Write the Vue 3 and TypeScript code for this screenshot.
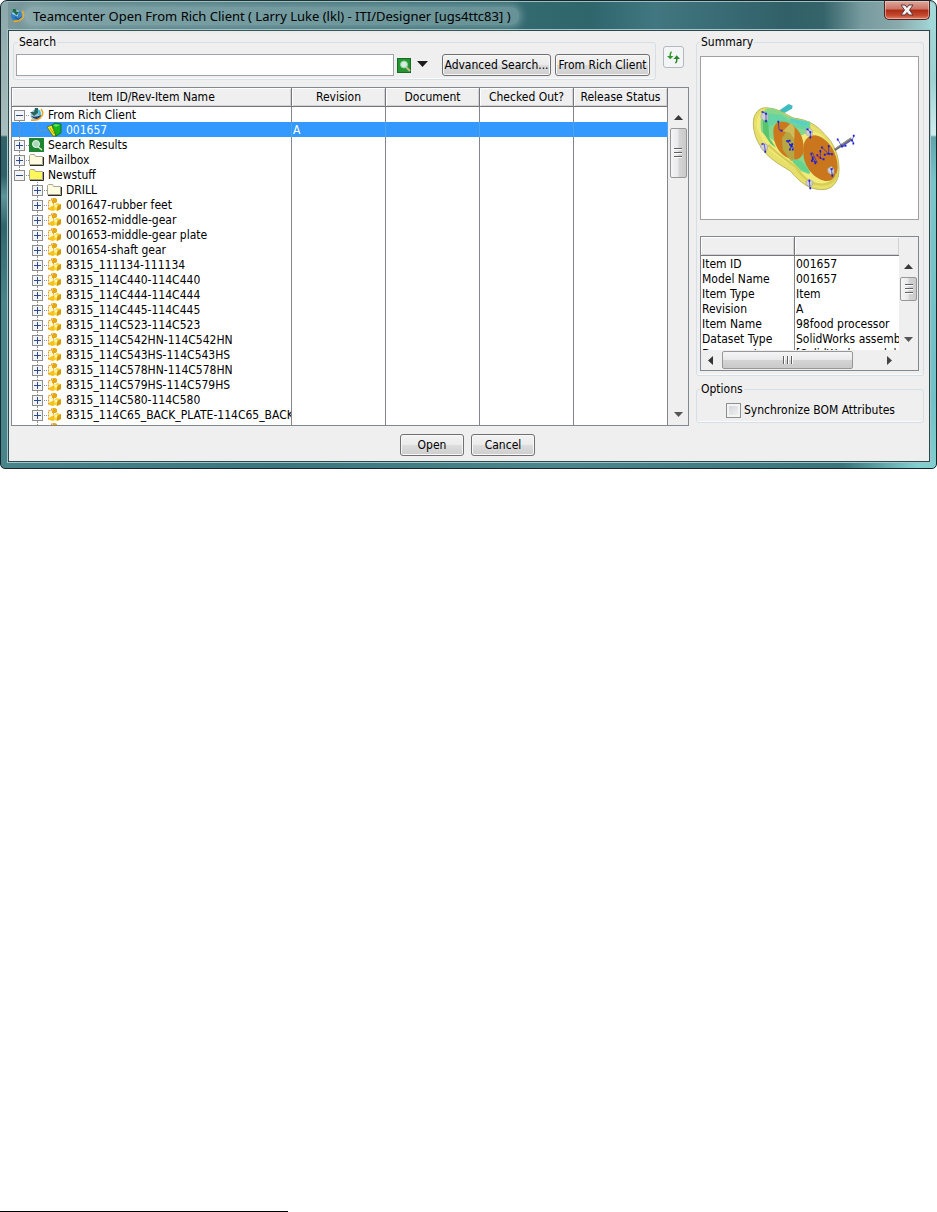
<script setup lang="ts">
import { ref } from 'vue'

type IconKind = 'client' | 'model' | 'search' | 'folder' | 'folder-open' | 'item'

interface TreeNode {
  label: string
  icon: IconKind
  level: number
  toggle: 'plus' | 'minus' | 'none'
  revision?: string
  root?: 'first' | 'middle' | 'last'
}

const item = (label: string): TreeNode => ({ label, icon: 'item', level: 1, toggle: 'plus' })

const nodes: TreeNode[] = [
  { label: 'From Rich Client', icon: 'client', level: 0, toggle: 'minus', root: 'first' },
  { label: '001657', icon: 'model', level: 1, toggle: 'none', revision: 'A', root: 'middle' },
  { label: 'Search Results', icon: 'search', level: 0, toggle: 'plus', root: 'middle' },
  { label: 'Mailbox', icon: 'folder', level: 0, toggle: 'plus', root: 'middle' },
  { label: 'Newstuff', icon: 'folder-open', level: 0, toggle: 'minus', root: 'last' },
  { label: 'DRILL', icon: 'folder', level: 1, toggle: 'plus' },
  item('001647-rubber feet'),
  item('001652-middle-gear'),
  item('001653-middle-gear plate'),
  item('001654-shaft gear'),
  item('8315_111134-111134'),
  item('8315_114C440-114C440'),
  item('8315_114C444-114C444'),
  item('8315_114C445-114C445'),
  item('8315_114C523-114C523'),
  item('8315_114C542HN-114C542HN'),
  item('8315_114C543HS-114C543HS'),
  item('8315_114C578HN-114C578HN'),
  item('8315_114C579HS-114C579HS'),
  item('8315_114C580-114C580'),
  item('8315_114C65_BACK_PLATE-114C65_BACK'),
  item(''),
]

const columns: string[] = ['Revision', 'Document', 'Checked Out?', 'Release Status']

const details: [string, string][] = [
  ['Item ID', '001657'],
  ['Model Name', '001657'],
  ['Item Type', 'Item'],
  ['Revision', 'A'],
  ['Item Name', '98food processor'],
  ['Dataset Type', 'SolidWorks assemb'],
  ['Document', '[SolidWorks model'],
]

const selected = ref('001657')
const query = ref('')
const sync = ref(false)
</script>

<template>
  <div class="page">
    <section class="window">
      <header class="titlebar">
        <svg class="app-icon" viewBox="0 0 16 16" aria-hidden="true">
          <circle cx="7" cy="8" r="6" fill="#2f7fc4" />
          <path d="M2 6Q5 1 10 3L8 9Z" fill="#a9d8f0" />
          <path d="M3 1h3l1 3h3L7 8 3 4Z" fill="#1f6b45" />
          <path d="M13 3q3 4 0 8-4 4-9 3" fill="none" stroke="#f0a51e" stroke-width="2" />
          <path d="M5 10l4 2 4-3" fill="none" stroke="#163f80" stroke-width="1" />
        </svg>
        <h1>Teamcenter Open From Rich Client ( Larry Luke (lkl) - ITI/Designer [ugs4ttc83] )</h1>
        <button class="close" type="button" aria-label="Close">
          <svg viewBox="0 0 14 12" aria-hidden="true">
            <path d="M1 1h4l2 2.500L9 1h4L9.500 6 13 11H9L7 8.500 5 11H1l3.500-5Z" fill="#f4f4f4" stroke="#5b3a3c" stroke-width="1" />
          </svg>
        </button>
      </header>

      <main class="client">
        <div class="content">
          <div class="left">
            <div class="top-row">
              <fieldset class="group search">
                <legend>Search</legend>
                <div class="search-row">
                  <input v-model="query" type="text" aria-label="Search" />
                  <button class="bare find" type="button" aria-label="Find">
                    <svg viewBox="0 0 14 15" aria-hidden="true">
                      <rect x=".5" y=".5" width="13" height="14" fill="#249530" stroke="#166b22" />
                      <path d="M8 8l5 5" stroke="#c9b58b" stroke-width="2" />
                      <circle cx="7" cy="6.500" r="3.500" fill="#d2eee2" stroke="#8fd39c" />
                    </svg>
                  </button>
                  <button class="bare drop" type="button" aria-label="Search options">
                    <svg viewBox="0 0 11 6" aria-hidden="true"><path d="M0 0h11L5.500 6Z" fill="#1c1c1c" /></svg>
                  </button>
                  <button class="push advanced" type="button">Advanced Search...</button>
                  <button class="push rich" type="button">From Rich Client</button>
                </div>
              </fieldset>
              <button class="refresh" type="button" aria-label="Refresh">
                <svg viewBox="0 0 14 14" aria-hidden="true">
                  <path d="M5 1Q3 2 3.500 6" fill="none" stroke="#2f9a2c" stroke-width="1.500" />
                  <path d="M0 5.500h7L3.500 9Z" fill="#2f9a2c" />
                  <path d="M9 13q2-1 1.500-5" fill="none" stroke="#2a8428" stroke-width="1.500" />
                  <path d="M7 8.500h7L10.500 4.500Z" fill="#2a8428" />
                </svg>
              </button>
            </div>

            <div class="tree-frame">
              <div class="tree-view">
                <table class="tree">
                  <colgroup>
                    <col class="name-col" />
                    <col v-for="c in columns" :key="c" class="attr-col" />
                  </colgroup>
                  <thead>
                    <tr>
                      <th scope="col">Item ID/Rev-Item Name</th>
                      <th v-for="c in columns" :key="c" scope="col">{{ c }}</th>
                    </tr>
                  </thead>
                  <tbody>
                    <tr
                      v-for="n in nodes"
                      :key="n.label"
                      :class="{ selected: n.label === selected }"
                      @click="selected = n.label"
                    >
                      <td>
                        <div class="node">
                          <span v-if="n.level === 1" class="rail">
                            <svg v-if="n.root" viewBox="0 0 18 15" aria-hidden="true"><path d="M7.500 0V15" class="dots" /></svg>
                          </span>
                          <button class="bare toggle" type="button" :tabindex="n.toggle === 'none' ? -1 : 0" :aria-label="'Toggle ' + n.label">
                            <svg viewBox="0 0 17 15" aria-hidden="true">
                              <path v-if="n.level === 1 || n.root === 'middle'" :d="n.toggle === 'none' ? 'M7.500 0V8' : 'M7.500 0V15'" class="dots" />
                              <path v-if="n.root === 'last'" d="M7.500 0V8" class="dots" />
                              <path v-if="n.root === 'first'" d="M7.500 8V15" class="dots" />
                              <path d="M8 8.500H17" class="dots" />
                              <g v-if="n.toggle !== 'none'">
                                <rect x="2.500" y="3.500" width="10" height="10" fill="#f4f4f4" stroke="#8d8d8d" />
                                <path d="M4 8.500h7" stroke="#2c4a94" />
                                <path v-if="n.toggle === 'plus'" d="M7.500 5v7" stroke="#2c4a94" />
                              </g>
                            </svg>
                          </button>
                          <svg class="icon" viewBox="0 0 15 15" aria-hidden="true">
                            <g v-if="n.icon === 'client'">
                              <circle cx="7" cy="8" r="5.500" fill="#9cc9dd" />
                              <path d="M1 5h4l1-4h3l0 5-4 3Z" fill="#2d6658" />
                              <path d="M2 9q4 5 10 2V8q-5 3-10 1Z" fill="#223f74" />
                              <path d="M12 2q4 5-1 9-3 3-9 2" fill="none" stroke="#efa522" stroke-width="1.500" />
                              <path d="M9 3q3 2 1 5" fill="none" stroke="#3cc2e0" stroke-width="2" />
                            </g>
                            <g v-else-if="n.icon === 'model'">
                              <path d="M0 5L5 3l4 6v5L6 14Z" fill="#f4ee1d" stroke="#55550e" stroke-width=".7" />
                              <path d="M5 3L8 1l6 1v9l-5 3-2-5Z" fill="#18b51d" stroke="#0a5c10" stroke-width=".7" />
                              <path d="M6 3l3-1 4 1-4 2Z" fill="#5ee05c" />
                              <path d="M3 6l4 6M5 5l3 5" stroke="#8a8210" stroke-width=".7" />
                            </g>
                            <g v-else-if="n.icon === 'search'">
                              <rect x="0" y="1" width="15" height="14" fill="#1f8430" />
                              <path d="M8 9l5 4" stroke="#dff0da" stroke-width="1.500" />
                              <circle cx="7" cy="7" r="3.500" fill="#a9d9bd" stroke="#e7f7e9" />
                            </g>
                            <g v-else-if="n.icon === 'folder' || n.icon === 'folder-open'">
                              <path d="M.5 12.500v-9l1-1h4l1 2h7v8Z" :fill="n.icon === 'folder' ? '#fdfce0' : '#fdf75e'" stroke="#a9a68c" />
                              <path d="M14.500 5v8.500H1" fill="none" stroke="#2b2b2b" />
                            </g>
                            <g v-else>
                              <path d="M1.500 3.500h3v-2h4v4h-2v7h-5Z" fill="#fff8c8" stroke="#f0962a" stroke-dasharray="2 1" />
                              <path d="M5 3l2-2 3 1v3L8 6 5 6Z" fill="#e3a812" />
                              <path d="M2 11l3-2 3 1v3l-2 1-4-1Z" fill="#f4c31c" />
                              <path d="M7 8l3-2 4 1v5l-4 2-3-2Z" fill="#f9d63a" />
                              <path d="M10 9l4-2v5l-4 2Z" fill="#d49a10" />
                              <circle cx="9" cy="9" r="1.500" fill="#fff6a6" />
                            </g>
                          </svg>
                          <span class="label">{{ n.label }}</span>
                        </div>
                      </td>
                      <td>{{ n.revision }}</td>
                      <td></td>
                      <td></td>
                      <td></td>
                    </tr>
                  </tbody>
                </table>
              </div>
              <div class="vbar tall">
                <button class="bare arrow" type="button" aria-label="Scroll up">
                  <svg viewBox="0 0 9 5" aria-hidden="true"><path d="M0 5h9L4.500 0Z" fill="#3a3a3a" /></svg>
                </button>
                <div class="thumb"><i></i><i></i><i></i></div>
                <button class="bare arrow end" type="button" aria-label="Scroll down">
                  <svg viewBox="0 0 9 5" aria-hidden="true"><path d="M0 0h9L4.500 5Z" fill="#555" /></svg>
                </button>
              </div>
            </div>
          </div>

          <aside class="right">
            <fieldset class="group summary">
              <legend>Summary</legend>
              <svg class="preview" viewBox="33 21 651 486" role="img" aria-label="Model preview">
                <path d="M255 190L296 162l12 5-2 9-43 24Z" fill="#3fbcc0" />
                <path d="M190 225C188 195 205 168 235 174c30 2 50 18 75 30 40 4 70 20 95 50 26 25 42 60 42 105 0 38-22 62-55 60-38-3-60-20-90-55-35-22-70-40-90-75-14-20-20-40-22-64Z" fill="#e6e06a" stroke="#bdb65c" stroke-width="3" />
                <path d="M201 235c-4-28 8-52 30-53 28 3 50 20 74 30l55 4v24l26 10c28 18 45 60 47 102 0 30-18 50-40 49-30-2-55-20-80-50-35-20-68-42-90-70Z" fill="#f1eb7c" />
                <path d="M214 245c-6-30 0-66 22-70 25-2 48 22 75 30l50 10v28l-30 15 12 60 14 55-25-10-30-35-50-55Z" fill="#86d78b" />
                <path d="M225 190l50 5 40 30 45-8-2 25-55-12-45-12-30 20Z" fill="#67d4a4" />
                <path d="M218 205l16 8 4 50 20 30-16-12-22-32Z" fill="#57c56e" />
                <path d="M300 205l58 12-12 12-44-12Z" fill="#59d0c2" />
                <path d="M250 246c0-28 18-37 43-28 30 12 50 42 48 78 0 28-20 39-45 29-28-12-46-42-46-79Z" fill="#cc781d" />
                <path d="M340 310c-2-34 8-54 36-54 36 5 67 52 67 95-1 30-15 44-38 42-38-8-64-48-65-83Z" fill="#c9761c" />
                <path d="M276 265l28-43 8 5 1 102-10 5-25-35Z" fill="#b4ac48" opacity=".9" />
                <path d="M278 244l25-25 11 14-1 35-13-20Z" fill="#cfbc58" />
                <path d="M235 285c30 30 55 46 82 65 25 40 55 55 82 54 22-1 36-12 42-33" fill="none" stroke="#d6cd54" stroke-width="7" />
                <path d="M310 328l22 4 26 28 2 12-24-12-28-23Z" fill="#64d38c" />
                <path d="M434 300l50-34" stroke="#6e6e6e" stroke-width="8" />
                <path d="M434 297l50-34" stroke="#aaa" stroke-width="2" />
                <g fill="#cfd0cf" stroke="#a3a3a0" stroke-width="2">
                  <path d="M214 192l12-6 8 10v14l-14 1-8-8Z" />
                  <path d="M212 286l11-7 11 8-3 13-12 1-7-7Z" />
                  <path d="M347 240l11-6 10 9-2 12-10 4-8-7Z" />
                  <path d="M413 356l11-7 8 9v12l-11 3-7-6Z" />
                  <path d="M348 394l10-6 11 7-2 12-13 1-6-6Z" />
                </g>
                <g fill="none" stroke="#2020d4" stroke-width="2">
                  <path d="M218 186l10 5v22M265 214l2 25 9 3M223 282l3 23M352 238l9 8v18M424 356l3 22M358 394l2 22M443 268l13 22 30-20 7-14M456 290l12-3M487 270l4 11M396 292l20 20M416 286v24l-12 4M416 310l10 2M362 314l14 22M367 307l14 30M382 338l-18-6M391 300v25l10 3M391 325l-12-10M292 272l14 22M298 270l-6 8M306 280l-6 16M310 292l-2 8" />
                </g>
                <g stroke="#1919df" stroke-width="5" stroke-linecap="square">
                  <path d="M217 186h1M228 191v1M228 213v1M265 215v1M274 242h1M217 282h1M226 305v1M352 238h1M361 246v1M361 262v1M424 357h2M427 377v1M358 392v1M361 414v1M443 268v1M456 289v1M466 287h1M491 257v1M486 271v1M490 280v1M396 292v1M416 288v1M415 312h3M404 314v1M426 312v1M364 311v1M368 322v5M376 337v3M366 332v1M391 303v1M391 323v1M401 327v1M382 315v1M291 273h3M299 272v1M300 284l6 5M307 282v1M308 298v1M300 298v1" />
                </g>
                <path d="M378 316l12 9M384 325l8-7" stroke="#dc3830" stroke-width="3" />
              </svg>

              <div class="detail-frame">
                <div class="detail-top">
                  <div class="detail-view">
                    <table class="details">
                      <colgroup>
                        <col class="key-col" />
                        <col />
                      </colgroup>
                      <thead>
                        <tr>
                          <th scope="col" aria-label="Property"></th>
                          <th scope="col" aria-label="Value"></th>
                        </tr>
                      </thead>
                      <tbody>
                        <tr v-for="d in details" :key="d[0]">
                          <td>{{ d[0] }}</td>
                          <td>{{ d[1] }}</td>
                        </tr>
                      </tbody>
                    </table>
                  </div>
                  <div class="vbar short">
                    <button class="bare arrow" type="button" aria-label="Scroll details up">
                      <svg viewBox="0 0 9 5" aria-hidden="true"><path d="M0 5h9L4.500 0Z" fill="#3a3a3a" /></svg>
                    </button>
                    <div class="thumb"><i></i><i></i><i></i></div>
                    <button class="bare arrow end" type="button" aria-label="Scroll details down">
                      <svg viewBox="0 0 9 5" aria-hidden="true"><path d="M0 0h9L4.500 5Z" fill="#555" /></svg>
                    </button>
                  </div>
                </div>
                <div class="hbar">
                  <button class="bare" type="button" aria-label="Scroll details left">
                    <svg viewBox="0 0 5 9" aria-hidden="true"><path d="M5 0v9L0 4.500Z" fill="#333" /></svg>
                  </button>
                  <div class="thumb"><i></i><i></i><i></i></div>
                  <button class="bare" type="button" aria-label="Scroll details right">
                    <svg viewBox="0 0 5 9" aria-hidden="true"><path d="M0 0v9l5-4.500Z" fill="#444" /></svg>
                  </button>
                </div>
              </div>
            </fieldset>

            <fieldset class="group options">
              <legend>Options</legend>
              <label class="check">
                <input v-model="sync" type="checkbox" />
                <span>Synchronize BOM Attributes</span>
              </label>
            </fieldset>
          </aside>
        </div>

        <footer class="actions">
          <button class="push" type="button">Open</button>
          <button class="push" type="button">Cancel</button>
        </footer>
      </main>
    </section>
    <hr class="rule" />
  </div>
</template>

<style>
body {
  margin: 0;
  background: #fff;
}
</style>

<style scoped>
* {
  box-sizing: border-box;
}
.page {
  min-height: 100vh;
  display: flex;
  flex-direction: column;
  font: 12px/15px "DejaVu Sans Condensed", "DejaVu Sans", sans-serif;
  color: #000;
}
.window {
  border: 1px solid #16262a;
  border-radius: 7px 7px 5px 5px;
  padding: 0 6px 6px 7px;
  background:
    linear-gradient(180deg, #a4dada 0, #9dd2d3 80px, #d0eeee 134px, #5fa5ac 136px, #78c6ca 180px, #6fc2c6 400px, #80d0d0 100%) right top / 6px 100% no-repeat,
    linear-gradient(180deg, #8ba8aa 0, #a9bdbe 134px, #2d6369 136px, #2d6369 175px, #5b969b 195px, #2f666c 225px, #47858b 300px, #47858b 100%) left top / 7px 100% no-repeat,
    linear-gradient(90deg, #47858b 0, #3a767d 30%, #4b868c 60%, #39757b 90%, #80d0d0 98%) left bottom / 100% 8px no-repeat,
    linear-gradient(90deg, #7f9c9f 0, #5d868b 8%, #487980 30%, #336a70 56%, #2f666c 63%, #417780 70%, #316068 84%, #35656b 88%, #769a9e 92%, #8aaaac 96%, #a5dcdc 100%);
  box-shadow: inset 0 1px 0 #9ebfc2;
}
.titlebar {
  height: 29px;
  display: flex;
  align-items: center;
}
.app-icon {
  width: 15px;
  height: 15px;
  margin-left: 2px;
}
h1 {
  margin: 0 auto 0 0;
  padding: 0 8px 0 8px;
  font: 13px/18px "Noto Sans", sans-serif;
  white-space: nowrap;
  border-radius: 8px;
  background: rgba(166, 196, 198, 0.45);
  box-shadow: 0 0 7px 3px rgba(166, 196, 198, 0.45);
}
.close {
  align-self: flex-start;
  width: 46px;
  height: 19px;
  padding: 0;
  display: grid;
  place-items: center;
  border: 1px solid #4e2326;
  border-top: 0;
  border-radius: 0 0 5px 5px;
  background: linear-gradient(180deg, #dda79b 0, #cb7363 45%, #ad2b14 50%, #c4492f 80%, #dc8468 100%);
  box-shadow: inset 0 0 0 1px rgba(255, 220, 210, 0.5);
}
.close svg {
  width: 14px;
  height: 12px;
}
.client {
  border: 1px solid #2b484e;
  box-shadow: 0 0 0 1px #a7c5c7;
  background: #efefef;
  padding: 3px 5px 5px 2px;
}
.content {
  display: flex;
  gap: 7px;
}
.left {
  flex: 1;
  min-width: 0;
}
.right {
  width: 228px;
}
.group {
  margin: 0;
  min-width: 0;
  border: 1px solid #d5dfe7;
  border-radius: 3px;
  box-shadow: inset 0 -1px 0 #fbfbfb;
}
legend {
  padding: 1px 1px 0;
  line-height: 15px;
}
.top-row {
  display: flex;
  align-items: flex-start;
  gap: 7px;
  padding: 0 5px 0 2px;
}
.search {
  flex: 1;
  padding: 4px 5px 3px 2px;
}
.search legend {
  margin-left: 2px;
}
.search-row {
  display: flex;
  align-items: center;
}
.search-row input {
  flex: 1;
  min-width: 0;
  height: 22px;
  border: 1px solid #a2a2aa;
  background: #fff;
  padding: 0 3px;
  font: inherit;
}
button {
  font: inherit;
  color: inherit;
}
.bare {
  padding: 0;
  border: 0;
  background: none;
}
svg {
  display: block;
}
.find {
  margin-left: 3px;
}
.find svg {
  width: 14px;
  height: 15px;
}
.drop {
  margin: 0 14px 2px 6px;
}
.drop svg {
  width: 11px;
  height: 6px;
}
.push {
  height: 22px;
  padding: 0;
  white-space: nowrap;
  border: 1px solid #707070;
  border-radius: 3px;
  background: linear-gradient(180deg, #f3f3f3 0, #ebebeb 48%, #dcdcdc 52%, #cecece 100%);
  box-shadow: inset 0 0 0 1px #f8f8f8;
}
.advanced {
  width: 109px;
  margin-right: 4px;
}
.rich {
  width: 95px;
}
.refresh {
  width: 21px;
  height: 22px;
  margin-top: 12px;
  padding: 0;
  display: grid;
  place-items: center;
  border: 1px solid #b4b9c0;
  border-radius: 3px;
  background: #f4f5f6;
}
.refresh svg {
  width: 13px;
  height: 13px;
}
.tree-frame {
  display: flex;
  height: 339px;
  margin-top: 7px;
  border: 1px solid #828790;
}
.tree-view {
  flex: 1;
  min-width: 0;
  overflow: hidden;
  background: #fff;
}
table {
  width: 100%;
  table-layout: fixed;
  border-collapse: separate;
  border-spacing: 0;
}
th {
  height: 19px;
  padding: 1px 0 0;
  font-weight: 400;
  text-align: center;
  white-space: nowrap;
  background: #efefef;
  border-right: 1px solid #75757c;
  border-bottom: 1px solid #75757c;
  box-shadow: inset 1px 1px 0 #fff, inset -1px -1px 0 #d2d2d2;
}
td {
  height: 15px;
  padding: 1px 0 0 1px;
  line-height: 14px;
  white-space: nowrap;
  overflow: hidden;
  border-right: 1px solid #85858c;
}
.attr-col {
  width: 94px;
}
.tree td:first-child {
  padding: 0;
}
.selected td {
  background: #3399ff;
  color: #fff;
  border-right-color: #4fa2ee;
}
.node {
  display: flex;
  height: 15px;
}
.rail {
  flex: none;
  width: 18px;
}
.rail svg {
  width: 18px;
  height: 15px;
}
.toggle {
  flex: none;
}
.toggle svg {
  width: 17px;
  height: 15px;
}
.dots {
  fill: none;
  stroke: #8f8f8f;
  stroke-dasharray: 1 1;
}
.icon {
  flex: none;
  width: 15px;
  height: 15px;
}
.label {
  margin-left: 4px;
  line-height: 17px;
}
.vbar {
  flex: none;
  display: flex;
  flex-direction: column;
  align-items: center;
  background: #efefef;
}
.tall {
  width: 20px;
  padding: 27px 0 8px;
}
.arrow svg {
  width: 9px;
  height: 5px;
}
.end {
  margin-top: auto;
}
.thumb {
  display: flex;
  flex-direction: column;
  align-items: center;
  justify-content: center;
  gap: 2px;
  border: 1px solid #979797;
  border-radius: 2px;
  background: linear-gradient(90deg, #f5f5f5 0, #e9e9eb 48%, #d4d4d6 52%, #cacaca 100%);
}
.thumb i {
  width: 8px;
  height: 2px;
  border-top: 1px solid #606060;
  background: #fff;
}
.tall .thumb {
  width: 17px;
  height: 50px;
  margin-top: 8px;
}
.summary {
  padding: 6px 4px 4px 3px;
}
.summary legend {
  margin-left: 0;
}
.preview {
  width: 100%;
  height: 164px;
  border: 1px solid #a0a0a0;
  background: #fff;
}
.detail-frame {
  height: 135px;
  margin-top: 16px;
  display: flex;
  flex-direction: column;
  border: 1px solid #828790;
  background: #efefef;
}
.detail-top {
  flex: 1;
  min-height: 0;
  display: flex;
}
.detail-view {
  flex: 1;
  min-width: 0;
  overflow: hidden;
  background: #fff;
}
.key-col {
  width: 94px;
}
.details td:last-child,
.details th:last-child {
  border-right: 0;
}
.short {
  width: 19px;
  padding: 27px 0 8px;
}
.short .thumb {
  width: 17px;
  height: 24px;
  margin-top: 8px;
}
.hbar {
  flex: none;
  height: 20px;
  display: flex;
  align-items: center;
  padding: 0 26px 0 7px;
}
.hbar svg {
  width: 5px;
  height: 9px;
}
.hbar .thumb {
  flex: 0 1 131px;
  flex-direction: row;
  height: 18px;
  margin: 0 auto 0 9px;
  background: linear-gradient(180deg, #f5f5f5 0, #e9e9eb 48%, #d4d4d6 52%, #cacaca 100%);
}
.hbar .thumb i {
  width: 2px;
  height: 8px;
  border-top: 0;
  border-left: 1px solid #606060;
}
.options {
  margin-top: 5px;
  padding: 6px 4px 4px 29px;
}
.options legend {
  margin-left: -26px;
}
.check {
  display: flex;
  align-items: center;
  gap: 3px;
}
.check input {
  appearance: none;
  flex: none;
  width: 15px;
  height: 15px;
  margin: 0;
  border: 1px solid #8e8f8f;
  background: linear-gradient(135deg, #cfd3d8 0, #f3f3f3 100%);
  box-shadow: inset 0 0 0 2px #f4f4f4;
}
.check input:checked {
  background: #3a5f9c;
}
.actions {
  display: flex;
  justify-content: center;
  gap: 7px;
  padding-top: 8px;
}
.actions .push {
  width: 64px;
}
.rule {
  width: 288px;
  height: 1px;
  margin: auto 0 0;
  border: 0;
  background: #000;
}
</style>
